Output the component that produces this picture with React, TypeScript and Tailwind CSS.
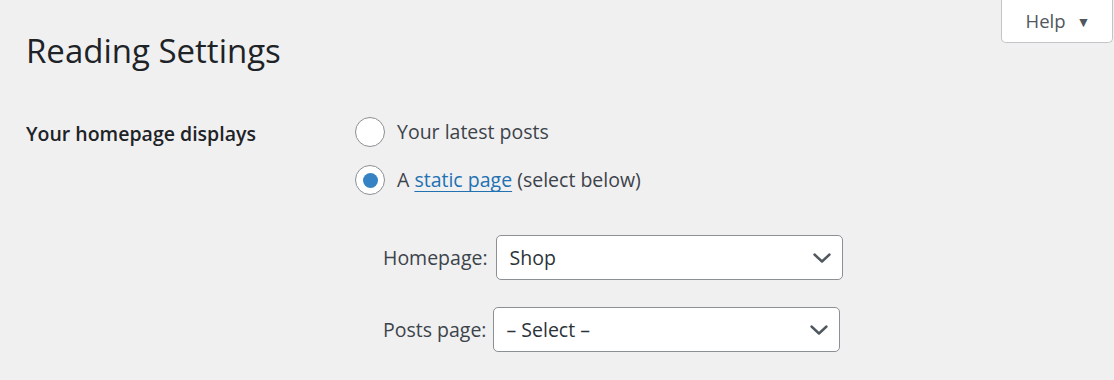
const font = { fontFamily: '"Open Sans", "Noto Sans", Arial, sans-serif' };

function Radio({ checked, children }: { checked?: boolean; children: React.ReactNode }) {
  return (
    <label className="flex items-center gap-[12px] h-[30px]">
      <span className="flex h-[30px] w-[30px] shrink-0 items-center justify-center rounded-full border border-[#8c8f94] bg-white">
        {checked && <span className="h-[15px] w-[15px] rounded-full bg-[#3582c4]" />}
      </span>
      <span className="text-[19.5px] text-[#3c434a]">{children}</span>
    </label>
  );
}

function Chevron() {
  return (
    <svg width="20" height="12" viewBox="0 0 20 12" fill="none">
      <path d="M2.5 2.5 L10 9.5 L17.5 2.5" stroke="#50575e" strokeWidth="2.4" strokeLinecap="round" strokeLinejoin="round" />
    </svg>
  );
}

function SelectRow({ label, value, gap }: { label: string; value: string; gap: string }) {
  return (
    <div className="flex items-center">
      <span className={`text-[19.5px] text-[#3c434a] ${gap}`}>{label}</span>
      <div className="flex h-[45px] w-[347px] items-center justify-between rounded-[5px] border border-[#8c8f94] bg-white pl-[13px] pr-[10px]">
        <span className="text-[19.5px] text-[#2c3338]">{value}</span>
        <Chevron />
      </div>
    </div>
  );
}

export default function App() {
  return (
    <div className="relative h-[380px] w-[1114px] overflow-hidden bg-[#f0f0f1]" style={font}>
      <button className="absolute right-[1px] top-0 flex h-[43px] w-[112px] items-center justify-center gap-[11px] rounded-b-[5px] border border-t-0 border-[#c3c4c7] bg-white pl-[2px] text-[18.5px] text-[#50575e]">
        Help
        <span className="text-[14px]">▼</span>
      </button>

      <h1 className="pl-[26px] pt-[26px] text-[33px] font-normal leading-[50px] text-[#1d2327]">
        Reading Settings
      </h1>

      <div className="mt-[41px] flex pl-[26px]">
        <div className="w-[329px] pt-[2px] text-[19.5px] font-semibold leading-[30px] text-[#1d2327]">
          Your homepage displays
        </div>
        <div className="flex flex-col">
          <div className="flex flex-col gap-[18px]">
            <Radio>Your latest posts</Radio>
            <Radio checked>
              A{" "}
              <a className="text-[#2271b1] underline underline-offset-[4px]" href="#">
                static page
              </a>{" "}
              (select below)
            </Radio>
          </div>
          <div className="mt-[40px] flex flex-col gap-[27px] pl-[28px]">
            <SelectRow label="Homepage:" value="Shop" gap="mr-[8px]" />
            <SelectRow label="Posts page:" value="– Select –" gap="mr-[6px]" />
          </div>
        </div>
      </div>
    </div>
  );
}
